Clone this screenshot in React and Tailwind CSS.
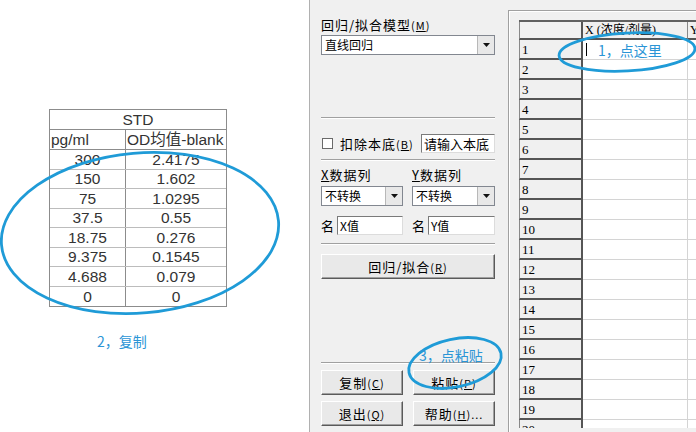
import React from "react";

const cjk = { fontFamily: '"Noto Sans CJK SC", "Liberation Sans", sans-serif' };
const gridFont = { fontFamily: '"Liberation Serif", "Noto Sans CJK SC", serif' };

const stdRows = [
  ["300", "2.4175"],
  ["150", "1.602"],
  ["75", "1.0295"],
  ["37.5", "0.55"],
  ["18.75", "0.276"],
  ["9.375", "0.1545"],
  ["4.688", "0.079"],
  ["0", "0"],
];

const Hot = ({ k }) => <span className="underline">{k}</span>;

const Sep = ({ className = "" }) => (
  <div className={`h-[2px] border-t border-[#a0a0a0] border-b border-b-white ${className}`} />
);

const Combo = ({ text, className = "" }) => (
  <div className={`flex h-[20px] bg-white border border-[#828790] items-center ${className}`}>
    <span className="flex-1 pl-[3px] text-[12px] leading-none text-black">{text}</span>
    <div className="w-[17px] h-full bg-[#e8e8e8] border-l border-[#b8b8b8] flex items-center justify-center">
      <svg width="7" height="4" viewBox="0 0 7 4">
        <path d="M0 0h7L3.5 4z" fill="#111" />
      </svg>
    </div>
  </div>
);

const Field = ({ text, className = "" }) => (
  <div className={`h-[19px] bg-white border border-[#7a7a7a] border-r-[#dcdcdc] border-b-[#dcdcdc] flex items-center pl-[2px] text-[12px] text-black leading-none ${className}`}>
    {text}
  </div>
);

const Btn = ({ children, className = "" }) => (
  <div className={`h-[25px] bg-[#e9e9e9] border border-white border-r-[#5a5a5a] border-b-[#5a5a5a] shadow-[inset_-1px_-1px_0_#a0a0a0] flex items-center justify-center text-[13px] text-black ${className}`}>
    {children}
  </div>
);

export default function App() {
  const rows = Array.from({ length: 20 }, (_, i) => i + 1);
  return (
    <div className="relative w-[696px] h-[432px] overflow-hidden bg-white flex" style={cjk}>
      {/* left: excel snippet */}
      <div className="w-[309px] shrink-0 flex flex-col pl-[49px] pt-[109px]">
        <div className="w-[178px] border border-[#8c8c8c] text-[#333] text-[15.5px]" style={{ fontFamily: '"Liberation Sans", "Noto Sans CJK SC", sans-serif' }}>
          <div className="h-[20px] border-b border-[#8c8c8c] flex items-center justify-center leading-none">STD</div>
          <div className="h-[20px] border-b border-[#8c8c8c] flex leading-none">
            <div className="w-[76px] border-r border-[#8c8c8c] flex items-center pl-[1px]">pg/ml</div>
            <div className="flex-1 flex items-center pl-[1px] whitespace-nowrap">OD均值-blank</div>
          </div>
          {stdRows.map(([a, b], i) => (
            <div key={i} className={`h-[19.5px] flex leading-none ${i < 7 ? "border-b border-[#bcbcbc]" : ""}`}>
              <div className="w-[76px] border-r border-[#8c8c8c] flex items-center justify-center">{a}</div>
              <div className="flex-1 flex items-center justify-center">{b}</div>
            </div>
          ))}
        </div>
        <div className="mt-[27px] ml-[48px] text-[14px] text-[#2b95d6] leading-none">2，复制</div>
      </div>

      {/* middle: dialog controls */}
      <div className="w-[199px] shrink-0 bg-[#f0f0f0] border-l border-[#b0b0b0] pl-[11px] pr-[13px] flex flex-col text-[13px] text-black leading-none">
        <div className="mt-[18px] tracking-[1px]">
          回归/拟合模型<span className="text-[11px]">(<Hot k="M" />)</span>
        </div>
        <Combo text="直线回归" className="mt-[4px]" />
        <Sep className="mt-[62px]" />
        <div className="mt-[15px] flex items-center h-[19px]">
          <div className="w-[11px] h-[11px] bg-white border border-[#6a6a6a] ml-[1px]" />
          <span className="ml-[7px] tracking-[1px]">
            扣除本底<span className="text-[11px]">(<Hot k="B" />)</span>
          </span>
          <Field text="请输入本底" className="ml-auto w-[74px] text-[13px]" />
        </div>
        <Sep className="mt-[6px]" />
        <div className="mt-[7px] flex">
          <div className="w-[91px] tracking-[1px]"><Hot k="X" />数据列</div>
          <div className="tracking-[1px]"><Hot k="Y" />数据列</div>
        </div>
        <div className="mt-[5px] flex gap-[9px]">
          <Combo text="不转换" className="w-[82px]" />
          <Combo text="不转换" className="w-[83px]" />
        </div>
        <div className="mt-[10px] flex items-center gap-[9px]">
          <div className="w-[82px] flex items-center">
            <span className="w-[16px]">名</span>
            <Field text="X值" className="flex-1" />
          </div>
          <div className="w-[83px] flex items-center">
            <span className="w-[16px]">名</span>
            <Field text="Y值" className="flex-1" />
          </div>
        </div>
        <Sep className="mt-[8px]" />
        <Btn className="mt-[9px]">
          <span className="tracking-[1px]">回归/拟合<span className="text-[11px]">(<Hot k="R" />)</span></span>
        </Btn>
        <Sep className="mt-[83px]" />
        <div className="mt-[6px] flex gap-[10px]">
          <Btn className="w-[82px]"><span className="tracking-[1px]">复制<span className="text-[11px]">(<Hot k="C" />)</span></span></Btn>
          <Btn className="w-[82px]"><span className="tracking-[1px]">粘贴<span className="text-[11px]">(<Hot k="P" />)</span></span></Btn>
        </div>
        <div className="mt-[6px] flex gap-[10px]">
          <Btn className="w-[82px]"><span className="tracking-[1px]">退出<span className="text-[11px]">(<Hot k="Q" />)</span></span></Btn>
          <Btn className="w-[82px]"><span className="tracking-[1px]">帮助<span className="text-[11px]">(<Hot k="H" />)...</span></span></Btn>
        </div>
      </div>

      {/* right: data grid */}
      <div className="flex-1 bg-[#f0f0f0] pt-[10px]">
        <div className="h-[422px] border-l border-t border-[#a0a0a0] shadow-[inset_1px_1px_0_#fff] pl-[10px] pt-[9px]">
          <div className="h-[408px] overflow-hidden bg-white" style={gridFont}>
            <div className="flex h-[20px] text-[12px] leading-none border-t-2 border-[#606060]">
              <div className="w-[64px] shrink-0 bg-[#f0f0f0] border-l border-[#888] border-r-2 border-r-[#555] border-b-2 border-b-[#555]" />
              <div className="w-[105px] shrink-0 bg-[#f0f0f0] border-r border-[#888] border-b-2 border-b-[#555] flex items-center pl-[2px] whitespace-nowrap overflow-hidden">
                X (浓度/剂量)
              </div>
              <div className="flex-1 bg-[#f0f0f0] border-b-2 border-b-[#555] flex items-center pl-[2px]">Y</div>
            </div>
            {rows.map((n) => (
              <div key={n} className="flex h-[20px] text-[13px] leading-none">
                <div className="w-[64px] shrink-0 bg-[#f0f0f0] border-l border-[#888] border-r-2 border-r-[#555] border-b-2 border-b-[#555] flex items-center pl-[2px] text-black">
                  {n}
                </div>
                <div className="w-[105px] shrink-0 border-r border-[#d4d4d4] border-b border-b-[#d4d4d4]">
                  {n === 1 && <div className="w-px h-[13px] bg-black ml-[3px] mt-[3px]" />}
                </div>
                <div className="flex-1 border-b border-[#d4d4d4]" />
              </div>
            ))}
          </div>
        </div>
      </div>

      {/* annotations */}
      <svg className="absolute inset-0 pointer-events-none" width="696" height="432" viewBox="0 0 696 432">
        <g fill="none" stroke="#1f9bd7" strokeWidth="2.8">
          <ellipse cx="140" cy="233" rx="139" ry="80" transform="rotate(-5 140 233)" />
          <ellipse cx="627" cy="52" rx="68" ry="19" transform="rotate(-3 627 52)" />
          <ellipse cx="455" cy="363" rx="47" ry="24" transform="rotate(-12 455 363)" />
        </g>
      </svg>
      <div className="absolute left-[598px] top-[43px] text-[14px] text-[#2b95d6] leading-none">1，点这里</div>
      <div className="absolute left-[419px] top-[348px] text-[14px] text-[#2b95d6] leading-none">3，点粘贴</div>
    </div>
  );
}
